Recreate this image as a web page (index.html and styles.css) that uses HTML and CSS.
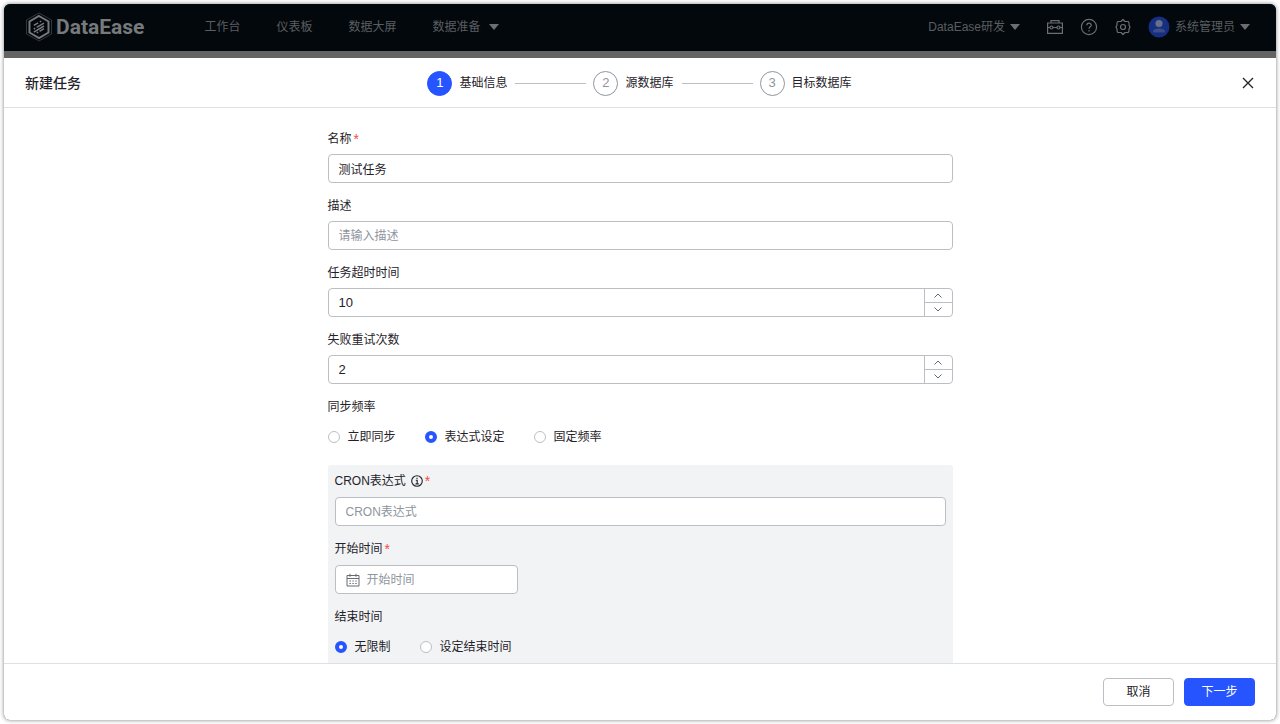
FILE: index.html
```html
<!DOCTYPE html>
<html lang="zh-CN">
<head>
<meta charset="utf-8">
<title>新建任务 - DataEase</title>
<meta name="viewport" content="width=device-width, initial-scale=1">
<link rel="stylesheet" href="styles.css">
</head>
<body>
<div class="window">
  <header class="topbar">
    <div class="logo">
      <svg class="logo-mark" viewBox="0 0 28 30" fill="none" stroke="currentColor">
        <path d="M14 1 26.500 8V22L14 29 1.500 22V8Z" stroke-width="0.700" opacity=".6"/>
        <path d="M14 4 23.500 9.500V20.500L14 26 4.500 20.500V9.500Z" stroke-width="2"/>
        <path d="M8.800 13.400 13.200 10.800M14.800 9.900l1.400-.8M8.800 17l1.400-.8M11.600 15.400 19 11.100M11.800 20.900l1.400-.8M14.600 19.300 19 16.700M8.800 20.200 19 14" stroke-width="1.500"/>
      </svg>
      <span class="logo-text">DataEase</span>
    </div>
    <nav class="nav">
      <a href="#">工作台</a>
      <a href="#">仪表板</a>
      <a href="#">数据大屏</a>
      <a href="#" class="with-caret">数据准备<span class="caret"></span></a>
    </nav>
    <div class="tools">
      <button class="tool org" type="button">DataEase研发<span class="caret"></span></button>
      <button class="tool" type="button" aria-label="工具箱">
        <svg class="tool-icon" viewBox="0 0 18 18" fill="none" stroke="currentColor" stroke-width="1.200">
          <path d="M5 5V2.600h8V5M1.600 5h14.800v10.400H1.600ZM1.600 9.500H4M7 9.500h4M14 9.500h2.400"/>
          <circle cx="5.500" cy="9.500" r="1.500"/><circle cx="12.500" cy="9.500" r="1.500"/>
        </svg>
      </button>
      <button class="tool" type="button" aria-label="帮助">
        <svg class="tool-icon" viewBox="0 0 18 18" fill="none" stroke="currentColor" stroke-width="1.200">
          <circle cx="9" cy="9" r="7.600"/>
          <path d="M6.800 7.300C6.800 4.500 11.300 4.500 11.300 7.200 11.300 8.900 9 8.800 9 10.800M9 12v1.400"/>
        </svg>
      </button>
      <button class="tool" type="button" aria-label="设置">
        <svg class="tool-icon" viewBox="0 0 18 18" fill="none" stroke="currentColor" stroke-width="1.200" stroke-linejoin="round">
          <path d="M9 1.500 11 3.500 14.200 3.500Q15.500 4.500 15 7L16 9 15 11Q15.500 13.500 14.200 14.500L11 14.500 9 16.500 7 14.500 3.800 14.500Q2.500 13.500 3 11L2 9 3 7Q2.500 4.500 3.800 3.500L7 3.500Z"/>
          <circle cx="9" cy="9" r="2.500"/>
        </svg>
      </button>
      <button class="tool user" type="button">
        <svg class="avatar" viewBox="0 0 22 22">
          <circle cx="11" cy="11" r="10.500" fill="#172f80"/>
          <circle cx="11" cy="7.500" r="3.600" fill="#68708a"/>
          <path d="M5 15.500C5 11.500 17 11.500 17 15.500 17 16.500 16 16.500 15.500 16.500H6.500C6 16.500 5 16.500 5 15.500Z" fill="#3c4d88"/>
        </svg>
        系统管理员<span class="caret"></span>
      </button>
    </div>
  </header>

  <main class="drawer">
    <div class="drawer-head">
      <h1 class="title">新建任务</h1>
      <ol class="steps">
        <li class="step active"><span class="step-num">1</span>基础信息</li>
        <li class="step"><span class="step-num">2</span>源数据库</li>
        <li class="step"><span class="step-num">3</span>目标数据库</li>
      </ol>
      <button class="close" type="button" aria-label="关闭">
        <svg viewBox="0 0 12 12" stroke="currentColor" stroke-width="1.300"><path d="M1 1 11 11M11 1 1 11"/></svg>
      </button>
    </div>

    <form class="drawer-body" id="task">
      <div class="form">
        <div class="field">
          <label class="label" for="name">名称<span class="req">*</span></label>
          <input class="input" id="name" type="text" value="测试任务">
        </div>
        <div class="field">
          <label class="label" for="desc">描述</label>
          <input class="input" id="desc" type="text" placeholder="请输入描述">
        </div>
        <div class="field">
          <label class="label" for="timeout">任务超时时间</label>
          <div class="number">
            <input class="number-input" id="timeout" type="number" value="10">
            <div class="spin">
              <button type="button" aria-label="增加"><svg viewBox="0 0 8 5"><path d="M.5 4.500 4 1 7.500 4.500"/></svg></button>
              <button type="button" aria-label="减少"><svg viewBox="0 0 8 5"><path d="M.5 .5 4 4 7.500 .5"/></svg></button>
            </div>
          </div>
        </div>
        <div class="field">
          <label class="label" for="retry">失败重试次数</label>
          <div class="number">
            <input class="number-input" id="retry" type="number" value="2">
            <div class="spin">
              <button type="button" aria-label="增加"><svg viewBox="0 0 8 5"><path d="M.5 4.500 4 1 7.500 4.500"/></svg></button>
              <button type="button" aria-label="减少"><svg viewBox="0 0 8 5"><path d="M.5 .5 4 4 7.500 .5"/></svg></button>
            </div>
          </div>
        </div>
        <fieldset class="field group">
          <legend class="label">同步频率</legend>
          <div class="radios">
            <label class="radio"><input type="radio" name="freq">立即同步</label>
            <label class="radio"><input type="radio" name="freq" checked>表达式设定</label>
            <label class="radio"><input type="radio" name="freq">固定频率</label>
          </div>
        </fieldset>
        <div class="panel">
          <div class="field">
            <label class="label" for="cron">CRON表达式
              <svg class="info" viewBox="0 0 12 12" fill="none" stroke="currentColor"><circle cx="6" cy="6" r="5.300" stroke-width="1.100"/><path d="M6 2.700v1.300M4.800 5.300H6.200V8.800M4.500 8.900h3.200" stroke-width="1.100"/></svg><span class="req">*</span></label>
            <input class="input" id="cron" type="text" placeholder="CRON表达式">
          </div>
          <div class="field">
            <label class="label" for="start">开始时间<span class="req">*</span></label>
            <div class="date">
              <svg class="calendar" viewBox="0 0 14 14" fill="none" stroke="currentColor"><path d="M1 2.500h12v10.500H1ZM1 5.500h12M4 .8v3M10 .8v3"/><path d="M3.500 8h7.500M3.500 10.500h7.500" stroke-width="1.200" stroke-dasharray="1.400 1.500"/></svg>
              <input class="date-input" id="start" type="text" placeholder="开始时间">
            </div>
          </div>
          <fieldset class="field group">
            <legend class="label">结束时间</legend>
            <div class="radios">
              <label class="radio"><input type="radio" name="end" checked>无限制</label>
              <label class="radio"><input type="radio" name="end">设定结束时间</label>
            </div>
          </fieldset>
        </div>
      </div>
    </form>

    <footer class="drawer-foot">
      <button class="btn" type="button">取消</button>
      <button class="btn primary" type="submit" form="task">下一步</button>
    </footer>
  </main>
</div>
</body>
</html>
```
FILE: styles.css
```css
* { box-sizing: border-box; }

body {
  margin: 0;
  height: 100vh;
  padding: 4px;
  background: #fff;
  color: #1f2329;
  font: 12px/20px "Liberation Sans", "Noto Sans CJK SC", sans-serif;
}

button, input { font: inherit; color: inherit; }
button { padding: 0; border: 0; background: none; cursor: pointer; }
svg { display: block; flex: none; }

.window {
  height: 100%;
  display: flex;
  flex-direction: column;
  overflow: hidden;
  border-radius: 6px;
  background: #646464;
  box-shadow: 0 0 4px rgba(0, 0, 0, .5);
}

/* Top bar */
.topbar {
  height: 47px;
  flex: none;
  display: flex;
  align-items: center;
  padding: 0 26px 2px 21px;
  background: #03080c;
  color: #5b5e61;
}
.logo { display: flex; align-items: center; gap: 3px; color: #777a7c; }
.logo-mark { width: 28px; height: 30px; }
.logo-text { font: bold 21px/28px Roboto, sans-serif; }
.nav { display: flex; gap: 36px; margin-left: 60px; }
.nav a { color: inherit; text-decoration: none; }
.nav .with-caret { display: flex; align-items: center; gap: 9px; }
.caret {
  border: 5px solid transparent;
  border-top: 6px solid #6c6f72;
  border-bottom: 0;
}
.tools { display: flex; align-items: center; gap: 16px; margin-left: auto; }
.tool { display: flex; align-items: center; gap: 5px; }
.org { margin-right: 10px; }
.tool-icon { width: 18px; height: 18px; color: #6c6f72; }
.avatar { width: 22px; height: 22px; }

/* Drawer */
.drawer {
  flex: 1;
  min-height: 0;
  display: flex;
  flex-direction: column;
  margin-top: 7px;
  background: #fff;
}
.drawer-head {
  height: 50px;
  flex: none;
  display: grid;
  grid-template-columns: 1fr auto 1fr;
  align-items: center;
  padding: 0 22px 0 21px;
  border-bottom: 1px solid #dee0e3;
}
.title { margin: 0; font-size: 14px; font-weight: 500; }
.steps { display: flex; margin: 0; padding: 1px 0 0; list-style: none; }
.step { display: flex; align-items: center; gap: 7px; }
.step + .step::before {
  content: "";
  width: 71px;
  height: 1px;
  margin-left: 8px;
  background: #bbbfc4;
}
.step-num {
  display: grid;
  place-items: center;
  width: 25px;
  height: 25px;
  border: 1px solid #8f959e;
  border-radius: 50%;
  color: #8f959e;
  font-size: 13px;
}
.active .step-num { border-color: #2655ff; background: #2655ff; color: #fff; }
.close { justify-self: end; width: 12px; height: 12px; }

.drawer-body {
  flex: 1;
  min-height: 0;
  overflow-y: auto;
  scrollbar-width: none;
  padding: 21px 24px;
}
.form { max-width: 625px; margin: 0 auto; }
.field { margin-bottom: 13px; }
.label { display: flex; align-items: center; height: 20px; margin-bottom: 5px; padding: 0; }
.req { margin-left: 2px; color: #f54a45; font-size: 14px; }
.info { width: 12px; height: 12px; margin-left: 5px; }

.input, .number, .date {
  width: 100%;
  height: 29px;
  border: 1px solid #bbbfc4;
  border-radius: 4px;
  background: #fff;
}
.input { display: block; padding: 0 10px; }
input::placeholder { color: #8f959e; opacity: 1; }
.number { display: flex; overflow: hidden; }
.number-input {
  flex: 1;
  min-width: 0;
  padding: 0 10px;
  border: 0;
  background: none;
  font-size: 13px;
  appearance: textfield;
}
.number-input::-webkit-inner-spin-button { appearance: none; }
.spin { width: 28px; display: flex; flex-direction: column; border-left: 1px solid #bbbfc4; }
.spin button { flex: 1; display: grid; place-items: center; }
.spin button + button { border-top: 1px solid #bbbfc4; }
.spin svg { width: 8px; height: 5px; fill: none; stroke: #646a73; }

.group { padding: 0; border: 0; margin: 0 0 18px; }
.radios { display: flex; gap: 29px; padding-top: 5px; }
.radio { display: flex; align-items: center; gap: 8px; }
.radio input {
  appearance: none;
  width: 12px;
  height: 12px;
  margin: 0;
  border: 1px solid #bbbfc4;
  border-radius: 50%;
  background: #fff;
}
.radio input:checked { border: 4px solid #2655ff; }

.panel { padding: 6px 7px; border-radius: 3px; background: #f2f3f5; }
.panel .label { margin-bottom: 6px; }
.panel .group .label { margin-bottom: 5px; }
.date { width: 183px; display: flex; align-items: center; gap: 7px; padding: 0 10px; }
.calendar { width: 14px; height: 14px; color: #646a73; }
.date-input { flex: 1; min-width: 0; padding: 0; border: 0; background: none; }

.drawer-foot {
  flex: none;
  display: flex;
  justify-content: flex-end;
  gap: 10px;
  padding: 14px 21px;
  border-top: 1px solid #dee0e3;
}
.btn { width: 71px; height: 28px; border: 1px solid #bbbfc4; border-radius: 4px; background: #fff; }
.primary { border-color: #2655ff; background: #2655ff; color: #fff; }
```
